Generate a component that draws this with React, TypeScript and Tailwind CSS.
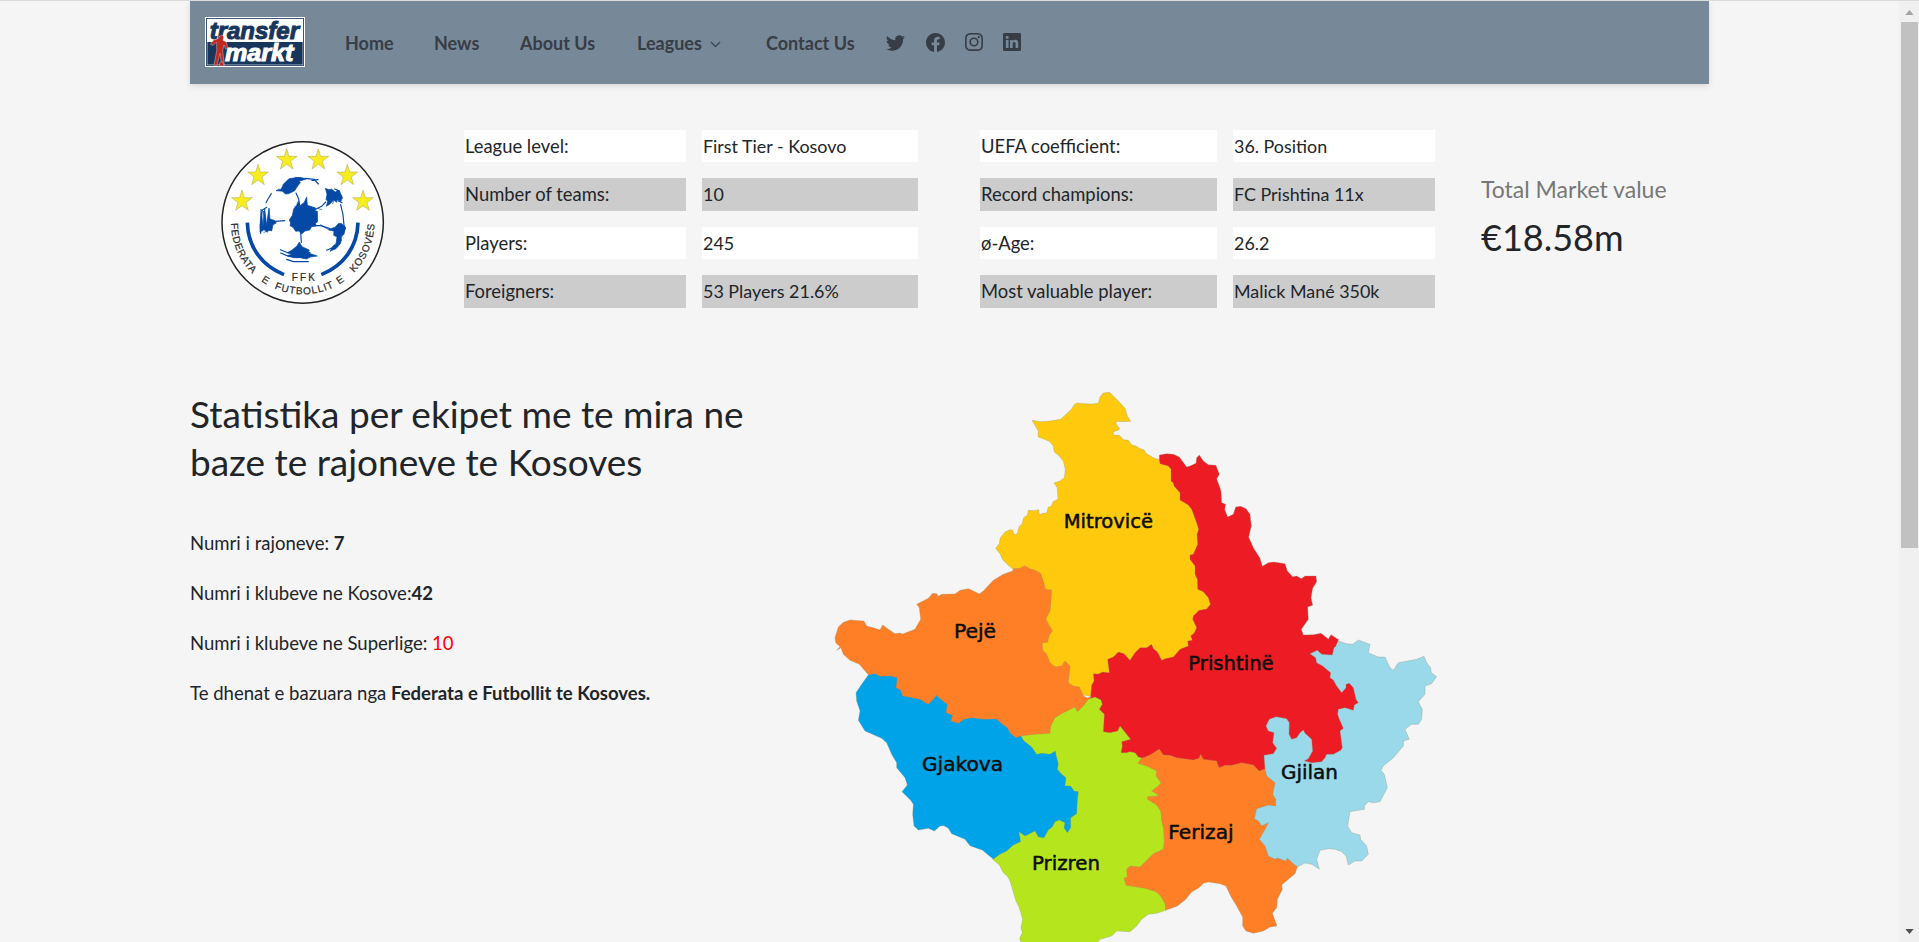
import React from "react";
import { BsTwitter, BsFacebook, BsInstagram, BsLinkedin, BsChevronDown } from "react-icons/bs";

function BrandLogo() {
  return (
    <svg viewBox="0 0 300 150" className="mb-[2px] h-[50px] w-[100px] shrink-0">
      <rect width="300" height="150" fill="#fff" />
      <rect x="4.500" y="4.500" width="291" height="141" fill="#fff" stroke="#3e5678" strokeWidth="3" />
      <rect x="7" y="75" width="286" height="68" fill="#18365c" />
      <text x="14" y="67" fontFamily="Liberation Sans, sans-serif" fontSize="72" fontWeight="700" fontStyle="italic" fill="#18365c" stroke="#18365c" strokeWidth="3" textLength="268" lengthAdjust="spacingAndGlyphs">transfer</text>
      <text x="60" y="131" fontFamily="Liberation Sans, sans-serif" fontSize="69" fontWeight="700" fontStyle="italic" fill="#fff" stroke="#fff" strokeWidth="3" textLength="205" lengthAdjust="spacingAndGlyphs">markt</text>
      <g fill="#c1281f" stroke="#fff" strokeWidth="1">
        <path d="M44 57l7-3 5 5-2 11 10 5 4 16-6 5-5-12-4 17 5 44-8 0-5-36-9 36-9-1 8-42 0-26-12 9-7-3 9-12 14-5z" />
        <path d="M44 137l8-4 6 14-14 0z" />
      </g>
    </svg>
  );
}

const STARS: [number, number][] = [
  [126, 241],
  [174, 164],
  [260, 117],
  [355, 117],
  [442, 164],
  [489, 241],
];

function FederationCrest() {
  return (
    <svg viewBox="60 60 495 495" className="h-[165px] w-[165px] shrink-0">
      <circle cx="308" cy="307.500" r="242" fill="#fff" stroke="#222" strokeWidth="4.500" />
      {STARS.map(([x, y]) => (
        <path key={x} transform={`translate(${x} ${y})`} d="M0-31L7-8 31-8 12 7 19 30 0 16-19 30-12 7-31-8-7-8Z" fill="#f6ec1e" stroke="#a9a457" strokeWidth="1.500" />
      ))}
      <path d="M142 308C144 380 184 436 252 464M474 308C472 380 432 436 364 464" fill="none" stroke="#0449a6" strokeWidth="11" />
      <g fill="#0449a6" stroke="#0449a6" strokeWidth="2" strokeLinejoin="round">
        <path d="M289 257l6-13 4 14 14-11 7-16 2 25 25 8-2 8 7 2 1 31-7 5 3 8-14 2-6 10-14 3-10 9-8-9-10 1-8-12-9-5 2-8-4-9 9-14 4-19z" />
        <path d="M229 212l15-5 6-14 9-9 8-8 30-4 22 5-22 7 4 4-8 10-9 14-18 9-10 1-8-8-8-1z" />
        <path d="M376 205l13 5 5-3 12 9 8-6 13 21-4 13-12-5-1 8-9-7-12 13-10 6 4-15-5-6 3-15z" />
        <path d="M180 325l3-58 6 54 5-56 6 52 7-53 3 33 13 4 6 8-10 5-4 19-10-3-3 7-10-8-12 7z" />
        <path d="M386 329l20-8 10-11 10 1 10 12-4 20-7 2-3 25-14 16-18 8 9-16 9-7 3-20-10-5 1-12z" />
        <path d="M275 391l15-12 8-13 8 14 22 10-5 8 29 10-21 3-12 6-18-4-19 0-20-6 14-5-14-4z" />
      </g>
      <g fill="none" stroke="#0449a6" strokeWidth="3.500" strokeLinecap="round">
        <path d="M288 219l8 18 4 26M347 268l18-9 12-13M226 304l28-2M340 317l22 0 28 9M302 337l2 30M315 175l28 3 12 14M336 181l18-2M214 221l-10 16-6 11M404 207l14 6 8 22M426 248l-12-6M422 254l7 30 3 32 4 8-10 24M241 389l24 10 65-2M242 399l24 10 47 4M260 418l20 7 45 0M380 391l22-10 22-21M182 340l-1-24 6-46 13-8" />
        <path d="M187 333l4-60 9 51 7-55M192 337l19-7 6-24M284 259l16 12M353 265l12 4M362 314l28 18M389 208l-5 42M414 212l-16 39M411 337l13 5M237 207l-8 5M285 172l28 3" strokeWidth="2" />
      </g>
      <defs>
        <path id="crest-arc" d="M93 308A215 215 0 0 0 523 308" />
      </defs>
      <g fontFamily="Liberation Sans, sans-serif" fontSize="30" fill="#2b2b2b" stroke="#2b2b2b" strokeWidth="0.700">
        <text textLength="168" lengthAdjust="spacing"><textPath href="#crest-arc" startOffset="2">FEDERATA</textPath></text>
        <text><textPath href="#crest-arc" startOffset="204">E</textPath></text>
        <text textLength="184" lengthAdjust="spacing"><textPath href="#crest-arc" startOffset="250">FUTBOLLIT</textPath></text>
        <text><textPath href="#crest-arc" startOffset="452">E</textPath></text>
        <text textLength="162" lengthAdjust="spacing"><textPath href="#crest-arc" startOffset="509">KOSOVËS</textPath></text>
        <text x="275" y="484" textLength="70">FFK</text>
      </g>
    </svg>
  );
}

type Region = { name: string; fill: string; x: number; y: number; w: number; points: string };

const REGIONS: Region[] = [
  {
    name: "Mitrovicë", fill: "#ffc90e", x: 731, y: 440, w: 268,
    points: "636,118 660,122 690,120 722,115 738,100 755,84 762,72 770,66 790,68 815,69 835,67 840,48 850,36 868,34 880,45 900,65 915,82 922,105 932,121 905,122 890,121 888,128 899,143 895,148 880,152 880,162 898,163 910,176 925,178 935,192 948,195 960,203 972,206 978,217 1000,230 1018,236 1060,245 1090,300 1125,360 1160,430 1180,500 1180,600 1200,660 1160,780 1060,870 960,900 870,940 815,946 700,930 640,860 600,700 600,600 578,563 565,553 548,536 540,518 527,502 538,488 541,470 555,453 570,446 578,448 583,461 592,458 597,437 606,430 611,410 622,403 625,388 640,389 656,386 658,402 668,397 680,396 684,380 695,374 699,362 714,355 712,320 702,306 720,300 733,290 736,265 730,240 715,222 703,213 700,195 688,181 654,167 655,150",
  },
  {
    name: "Prishtinë", fill: "#ed1c24", x: 1105, y: 866, w: 256,
    points: "1018,236 1018,222 1040,218 1060,220 1078,228 1100,258 1112,254 1128,247 1130,230 1138,222 1150,240 1165,251 1188,253 1192,265 1198,280 1190,294 1198,315 1203,330 1205,365 1217,370 1214,385 1223,408 1240,400 1247,378 1262,376 1278,383 1290,400 1294,435 1286,468 1300,500 1320,532 1327,556 1345,545 1362,543 1395,548 1402,570 1418,587 1430,585 1444,593 1455,585 1488,585 1490,602 1478,622 1473,650 1478,673 1463,678 1465,715 1444,745 1450,762 1480,761 1503,757 1525,774 1533,761 1556,776 1548,795 1538,822 1520,860 1600,870 1640,950 1640,1000 1600,1050 1600,1120 1540,1180 1480,1200 1360,1200 1200,1200 1020,1160 950,1150 880,1100 800,1000 812,945 815,912 822,900 820,878 835,879 848,873 868,875 863,835 880,828 895,813 912,818 930,838 945,815 960,800 980,800 995,790 1000,803 1012,812 1025,838 1040,832 1060,828 1080,805 1105,795 1103,780 1117,778 1112,765 1122,757 1130,740 1118,715 1120,705 1137,688 1160,684 1171,670 1165,650 1150,632 1133,625 1132,595 1125,580 1125,555 1110,535 1110,522 1120,520 1133,490 1131,460 1136,445 1128,420 1115,385 1105,372 1080,357 1080,335 1062,315 1060,306 1053,300 1053,265 1045,255 1020,248",
  },
  {
    name: "Pejë", fill: "#ff7f27", x: 402, y: 770, w: 126,
    points: "45,770 55,738 70,724 90,717 132,720 140,735 165,742 180,747 188,732 205,745 225,758 240,756 248,759 285,745 302,715 298,680 290,670 325,652 338,637 350,638 355,646 365,640 405,639 420,628 445,623 460,630 478,639 490,630 520,598 550,580 578,570 580,563 600,562 614,554 630,563 645,568 662,577 668,595 677,625 695,627 694,645 690,690 677,714 697,750 688,762 683,784 667,785 668,808 680,820 690,845 705,857 725,855 735,840 750,855 745,905 760,915 778,918 790,945 803,951 815,945 780,1010 700,1080 600,1090 500,1100 350,1000 200,940 145,881 118,850 90,838 70,820 63,800 50,808 60,797 47,785",
  },
  {
    name: "Gjilan", fill: "#99d9ea", x: 1383, y: 1193, w: 171,
    points: "1556,780 1580,788 1598,790 1615,777 1650,790 1645,815 1675,828 1695,828 1710,860 1720,868 1735,845 1790,835 1812,826 1820,845 1832,860 1834,875 1850,887 1835,908 1815,915 1815,940 1795,962 1807,985 1805,1015 1795,1030 1775,1030 1755,1045 1768,1075 1750,1080 1750,1095 1720,1130 1690,1155 1683,1168 1693,1180 1702,1220 1680,1262 1660,1265 1645,1262 1633,1275 1633,1285 1590,1292 1583,1335 1595,1355 1620,1362 1622,1375 1640,1395 1645,1420 1625,1440 1605,1440 1585,1452 1578,1425 1565,1412 1545,1405 1525,1403 1500,1408 1490,1435 1498,1465 1475,1450 1455,1446 1433,1457 1400,1470 1300,1400 1270,1300 1330,1240 1320,1180 1335,1163 1332,1123 1360,1118 1370,1102 1358,1085 1362,1055 1345,1050 1338,1035 1348,1015 1368,1007 1400,1013 1408,1025 1407,1060 1415,1075 1430,1070 1440,1055 1450,1047 1455,1057 1475,1075 1478,1110 1465,1133 1453,1140 1475,1145 1505,1142 1515,1130 1520,1120 1540,1120 1562,1108 1567,1100 1560,1050 1570,1042 1558,1015 1553,1000 1555,985 1575,980 1600,988 1603,972 1615,965 1608,955 1600,920 1588,907 1578,910 1578,920 1565,935 1550,915 1540,897 1530,890 1532,875 1508,855 1490,845 1487,830 1470,818 1492,808 1505,820 1537,822 1542,800 1555,790",
  },
  {
    name: "Prizren", fill: "#b5e61d", x: 636, y: 1466, w: 204,
    points: "602,1065 645,1060 690,1057 692,1035 705,1010 730,995 765,978 772,992 790,975 805,955 825,948 843,957 847,970 838,985 853,1000 850,1052 870,1055 893,1050 900,1035 912,1050 932,1075 905,1082 907,1095 903,1115 920,1115 930,1112 945,1115 955,1128 968,1132 1050,1145 1060,1200 1060,1500 1037,1588 1010,1597 985,1600 965,1615 950,1635 930,1652 890,1650 875,1665 840,1675 828,1690 604,1690 599,1672 607,1655 603,1640 608,1615 598,1580 588,1560 570,1500 562,1485 550,1475 538,1452 518,1435 600,1300 700,1200 620,1110",
  },
  {
    name: "Ferizaj", fill: "#ff7f27", x: 1045, y: 1373, w: 196,
    points: "953,1147 965,1132 990,1122 1018,1104 1030,1122 1050,1123 1070,1130 1120,1137 1137,1132 1142,1120 1150,1135 1190,1140 1197,1160 1215,1153 1235,1153 1265,1145 1300,1152 1318,1170 1335,1163 1340,1185 1365,1205 1358,1240 1367,1255 1367,1275 1345,1272 1310,1283 1303,1313 1315,1320 1325,1335 1345,1325 1335,1345 1318,1375 1335,1395 1345,1425 1365,1435 1372,1431 1397,1440 1402,1432 1420,1448 1432,1457 1425,1478 1405,1495 1385,1512 1387,1525 1372,1555 1370,1580 1357,1597 1371,1635 1350,1638 1330,1650 1300,1657 1278,1650 1268,1635 1268,1608 1250,1575 1232,1545 1218,1515 1200,1508 1165,1503 1150,1507 1137,1520 1115,1533 1095,1557 1072,1575 1037,1588 1035,1568 1022,1545 1008,1532 975,1522 918,1513 912,1492 922,1488 920,1465 930,1455 960,1458 1000,1418 1030,1405 1033,1380 1030,1340 1025,1320 1022,1290 1010,1272 983,1255 983,1247 1015,1245 1010,1238 995,1230 1015,1215 1023,1205 1008,1185 1010,1170 980,1155",
  },
  {
    name: "Gjakova", fill: "#00a2e8", x: 306, y: 1169, w: 243,
    points: "145,882 165,878 180,886 212,885 232,890 228,920 242,928 248,945 300,955 324,970 340,955 350,943 362,955 382,970 378,995 398,1003 392,1020 415,1027 432,1015 455,1010 490,1015 530,1014 545,1028 562,1040 572,1058 588,1070 602,1065 612,1080 635,1098 650,1120 665,1117 690,1120 706,1110 710,1130 715,1148 712,1165 725,1180 738,1190 735,1215 752,1215 762,1230 775,1232 772,1260 770,1298 752,1310 752,1340 742,1355 732,1340 735,1325 718,1317 705,1322 697,1338 685,1347 672,1370 655,1368 645,1350 615,1365 597,1352 602,1382 580,1392 560,1410 540,1420 520,1434 508,1425 488,1408 450,1394 435,1375 395,1358 385,1342 372,1334 360,1335 343,1350 325,1342 295,1347 282,1335 278,1300 280,1270 272,1258 246,1232 262,1212 255,1190 230,1160 230,1145 215,1120 200,1085 185,1072 135,1050 115,1018 120,990 110,960 108,935 125,910",
  },
];

function KosovoMap() {
  return (
    <svg viewBox="0 0 1890 1686" className="mt-[1px] h-[562px] w-[630px] shrink-0">
      {REGIONS.map((r) => (
        <polygon key={r.name} points={r.points} fill={r.fill} stroke="#8d8a70" strokeOpacity="0.3" strokeWidth="3" strokeLinejoin="round" />
      ))}
      {REGIONS.map((r) => (
        <text key={r.name} x={r.x} y={r.y} textLength={r.w} lengthAdjust="spacingAndGlyphs" fontFamily="DejaVu Sans, sans-serif" fontSize="56" fill="#0d0d0d" stroke="#0d0d0d" strokeWidth="1.500">
          {r.name}
        </text>
      ))}
    </svg>
  );
}

type Row = { label: string; value: string };

const LEAGUE: Row[] = [
  { label: "League level:", value: "First Tier - Kosovo" },
  { label: "Number of teams:", value: "10" },
  { label: "Players:", value: "245" },
  { label: "Foreigners:", value: "53 Players 21.6%" },
];

const RECORDS: Row[] = [
  { label: "UEFA coefficient:", value: "36. Position" },
  { label: "Record champions:", value: "FC Prishtina 11x" },
  { label: "ø-Age:", value: "26.2" },
  { label: "Most valuable player:", value: "Malick Mané 350k" },
];

function FactTable({ rows, columns }: { rows: Row[]; columns: string }) {
  return (
    <div className={`grid content-start gap-x-4 gap-y-4 ${columns}`}>
      {rows.map((row, i) => {
        const tone = i % 2 ? "h-[33px] bg-[#ccc]" : "h-8 bg-white";
        return (
          <React.Fragment key={row.label}>
            <div className={`pl-px text-[18.4px] leading-[33px] ${tone}`}>{row.label}</div>
            <div className={`pl-px text-[17.9px] leading-[33px] ${tone}`}>{row.value}</div>
          </React.Fragment>
        );
      })}
    </div>
  );
}

function NavBar() {
  return (
    <nav className="flex h-[83px] items-center bg-[#778899] pl-[15px] text-[18px] font-bold text-[#373d45] shadow-[0_2px_6px_rgba(0,0,0,0.12)]">
      <BrandLogo />
      <div className="flex items-center pl-[40px] leading-6">
        <a className="w-[89px]">Home</a>
        <a className="w-[86px]">News</a>
        <a className="w-[117px]">About Us</a>
        <a className="flex w-[129px] items-center">
          Leagues
          <BsChevronDown className="mt-1 ml-2 h-[11px] w-[11px] stroke-1" />
        </a>
        <a className="w-[119.500px]">Contact Us</a>
      </div>
      <div className="flex items-center pb-[1px]">
        <BsTwitter className="mr-[21.500px] h-[19px] w-[19px]" />
        <BsFacebook className="mr-[20px] h-[19px] w-[19px]" />
        <BsInstagram className="mr-[20px] h-[18px] w-[18px]" />
        <BsLinkedin className="h-[18px] w-[18px]" />
      </div>
    </nav>
  );
}

function ScrollBar() {
  return (
    <div className="flex w-5 shrink-0 flex-col items-center bg-[#f0f0f0]">
      <svg viewBox="0 0 10 6" className="mt-[9px] h-[5px] w-[9px]"><path d="M0 6L5 0 10 6Z" fill="#a3a3a3" /></svg>
      <div className="mt-[7px] h-[526px] w-[17px] bg-[#c1c1c1]" />
      <svg viewBox="0 0 10 6" className="mt-auto mb-[8px] h-[5px] w-[9px]"><path d="M0 0L5 6 10 0Z" fill="#505050" /></svg>
    </div>
  );
}

export default function App() {
  return (
    <div className="flex h-[942px] w-full overflow-hidden border-t border-[#d9dbda] bg-[#f5f5f5] font-['Lato',sans-serif] text-[18.55px] text-[#212529]">
      <main className="min-w-0 flex-1 pl-[190px]">
        <div className="w-[1519px]">
          <NavBar />
          <section className="flex h-[225px] pt-[46px]">
            <div className="flex w-[274px] pt-[10px] pl-[30px]">
              <FederationCrest />
            </div>
            <FactTable rows={LEAGUE} columns="grid-cols-[222px_216px]" />
            <div className="w-[62px]" />
            <FactTable rows={RECORDS} columns="grid-cols-[237px_202px]" />
            <div className="flex flex-col pt-[41px] pl-[46px]">
              <p className="text-[23px] leading-9 text-[#777]">Total Market value</p>
              <p className="mt-1.5 text-[36px] leading-12">€18.58m</p>
            </div>
          </section>
          <section className="flex pt-[71px]">
            <div className="w-[630px] pt-[10px]">
              <h1 className="text-[37px] leading-12 whitespace-nowrap">
                Statistika per ekipet me te mira ne
                <br />
                baze te rajoneve te Kosoves
              </h1>
              <div className="mt-[42px] flex flex-col gap-5 leading-[30px]">
                <p>Numri i rajoneve: <b>7</b></p>
                <p>Numri i klubeve ne Kosove:<b>42</b></p>
                <p>Numri i klubeve ne Superlige: <span className="text-[#ff0000]">10</span></p>
                <p>Te dhenat e bazuara nga <b>Federata e Futbollit te Kosoves.</b></p>
              </div>
            </div>
            <KosovoMap />
          </section>
        </div>
      </main>
      <ScrollBar />
    </div>
  );
}
